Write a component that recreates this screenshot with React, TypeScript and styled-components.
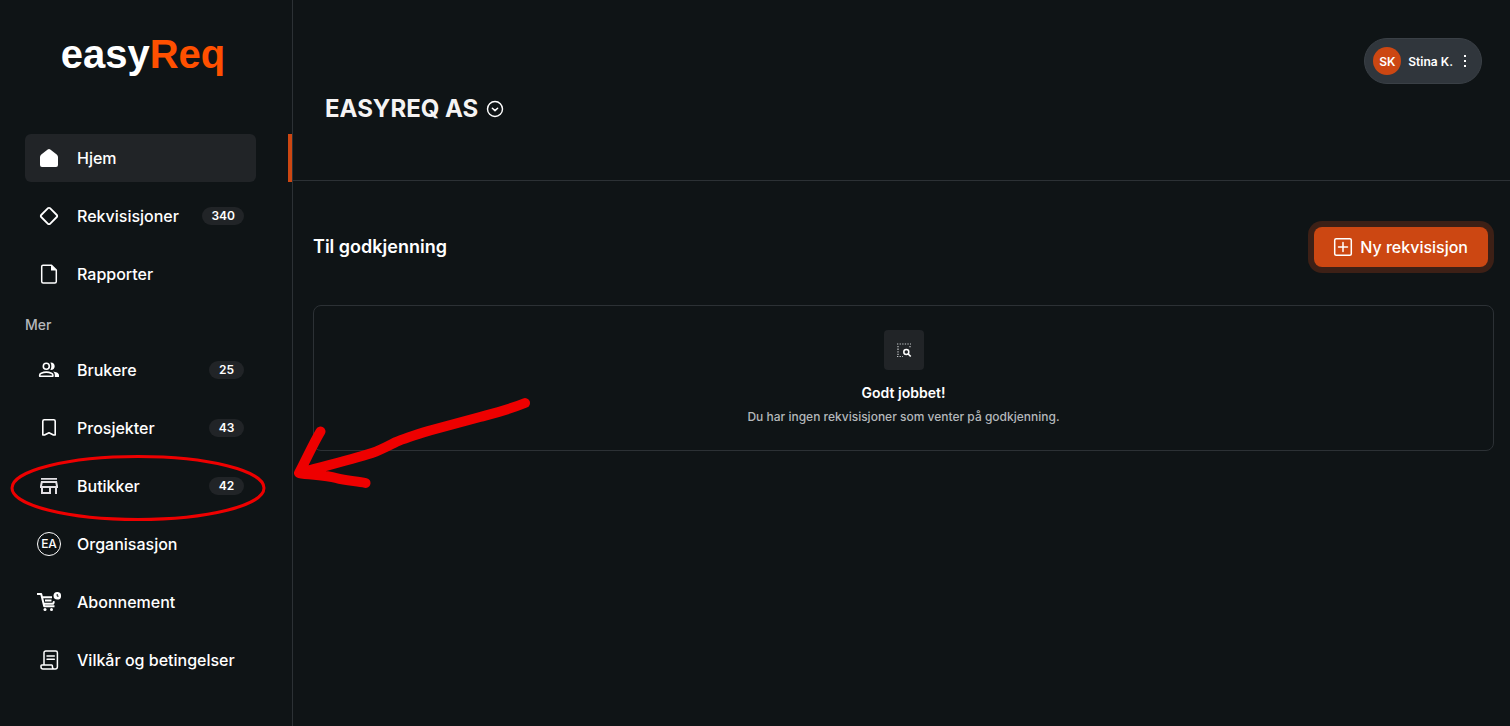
import React from "react";
import styled, { createGlobalStyle } from "styled-components";

const color = {
  bg: "#0f1416",
  raised: "#212427",
  line: "#2c3135",
  accent: "#cc4712",
  text: "#ffffff",
  muted: "#b4b8bb",
  pill: "#30363c",
  mark: "#ee0000",
};

const GlobalStyle = createGlobalStyle`
  *, *::before, *::after { box-sizing: border-box; }
  body {
    margin: 0;
    background: ${color.bg};
    color: ${color.text};
    font-family: Inter, "Liberation Sans", sans-serif;
  }
  button { font: inherit; color: inherit; border: 0; background: none; padding: 0; cursor: pointer; }
  h1, h2, h3, p, ul { margin: 0; padding: 0; }
  ul { list-style: none; }
`;

const Page = styled.div`
  position: relative;
  display: grid;
  grid-template-columns: 293px minmax(0, 1fr);
  min-height: 100vh;
`;

const Sidebar = styled.aside`
  border-right: 1px solid ${color.line};
  padding-bottom: 40px;
`;

const Logo = styled.a`
  display: block;
  padding: 30px 6px 56px 0;
  font: 700 40px/48px "Liberation Sans", Arial, sans-serif;
  text-align: center;
  color: ${color.text};
  text-decoration: none;
  span { color: #ff5000; }
`;

const NavList = styled.ul`
  display: flex;
  flex-direction: column;
  gap: 10px;
`;

const NavRow = styled.li<{ $active?: boolean }>`
  padding: 0 32px 0 25px;
  border-right: 4px solid ${(p) => (p.$active ? color.accent : "transparent")};
`;

const NavLink = styled.a<{ $active?: boolean }>`
  display: flex;
  align-items: center;
  gap: 16px;
  height: 48px;
  padding: 0 12px;
  border-radius: 6px;
  background: ${(p) => (p.$active ? color.raised : "transparent")};
  color: ${color.text};
  font-size: 16px;
  font-weight: 500;
  line-height: 24px;
  text-decoration: none;
  white-space: nowrap;
`;

const NavLabel = styled.span`
  flex: 1;
`;

const Badge = styled.span`
  min-width: 35px;
  padding: 0 9px;
  border-radius: 9px;
  background: ${color.raised};
  font-size: 12px;
  font-weight: 600;
  line-height: 18px;
  text-align: center;
`;

const SectionLabel = styled.h2`
  padding: 17px 25px 11px;
  color: ${color.muted};
  font-size: 14px;
  font-weight: 500;
  line-height: 20px;
`;

const Glyph = styled.svg`
  flex: none;
  display: block;
`;

const Initials = styled.span`
  flex: none;
  display: grid;
  place-items: center;
  width: 24px;
  height: 24px;
  border: 1px solid ${color.text};
  border-radius: 50%;
  font-size: 12px;
  line-height: 12px;
`;

const Header = styled.header`
  display: flex;
  justify-content: space-between;
  align-items: flex-start;
  height: 181px;
  padding: 38px 28px 0 32px;
  border-bottom: 1px solid ${color.line};
`;

const OrgButton = styled.button`
  display: flex;
  align-items: center;
  gap: 8px;
  margin-top: 55px;
`;

const OrgName = styled.h1`
  font-size: 24px;
  font-weight: 700;
  line-height: 32px;
  color: #f5f3f3;
`;

const UserButton = styled.button`
  display: flex;
  align-items: center;
  gap: 7px;
  height: 46px;
  padding: 0 11px 0 8px;
  border: 1px solid #3a4046;
  border-radius: 23px;
  background: ${color.pill};
  font-size: 12px;
  font-weight: 600;
`;

const Avatar = styled.span`
  display: grid;
  place-items: center;
  width: 28px;
  height: 28px;
  border-radius: 50%;
  background: ${color.accent};
`;

const Content = styled.section`
  padding: 46px 16px 40px 20px;
`;

const Toolbar = styled.div`
  display: flex;
  justify-content: space-between;
  align-items: center;
  padding-right: 6px;
`;

const Heading = styled.h2`
  font-size: 18px;
  font-weight: 600;
  line-height: 24px;
`;

const PrimaryButton = styled.button`
  display: flex;
  align-items: center;
  gap: 5px;
  height: 40px;
  padding: 0 20px 0 17px;
  border-radius: 8px;
  background: ${color.accent};
  box-shadow: 0 0 0 6px #3d2016;
  font-size: 16px;
  font-weight: 500;
`;

const EmptyCard = styled.div`
  display: flex;
  flex-direction: column;
  align-items: center;
  margin-top: 38px;
  padding: 24px 16px 23px;
  border: 1px solid ${color.line};
  border-radius: 8px;
  text-align: center;
`;

const EmptyIcon = styled.span`
  display: grid;
  place-items: center;
  width: 40px;
  height: 40px;
  margin-bottom: 13px;
  border-radius: 4px;
  background: ${color.raised};
`;

const EmptyTitle = styled.h3`
  font-size: 14px;
  font-weight: 600;
  line-height: 20px;
`;

const EmptyText = styled.p`
  margin-top: 4px;
  color: ${color.muted};
  font-size: 12px;
  font-weight: 500;
  line-height: 20px;
`;

const Annotation = styled.svg`
  position: absolute;
  top: 0;
  left: 0;
  pointer-events: none;
`;

function Icon({ size = 24, children }: { size?: number; children: React.ReactNode }) {
  return (
    <Glyph width={size} height={size} viewBox="0 0 24 24" fill="none" aria-hidden="true">
      {children}
    </Glyph>
  );
}

const line = { stroke: "currentColor", strokeWidth: 1.5, strokeLinejoin: "round", strokeLinecap: "round" } as const;

const HomeIcon = () => (
  <Icon>
    <path fill="currentColor" d="M10.700 3.500a2 2 0 0 1 2.600 0l6.400 4.900Q21 9.400 21 11v8a2 2 0 0 1-2 2H5a2 2 0 0 1-2-2v-8q0-1.600 1.300-2.600z" />
  </Icon>
);

const DiamondIcon = () => (
  <Icon>
    <path {...line} strokeWidth={1.8} d="M11 4.200a1.400 1.400 0 0 1 2 0l6.800 6.800a1.400 1.400 0 0 1 0 2L13 19.800a1.400 1.400 0 0 1-2 0L4.200 13a1.400 1.400 0 0 1 0-2z" />
  </Icon>
);

const FileIcon = () => (
  <Icon>
    <path {...line} d="M6 3.200h8.500l4.800 4.800v11.500a1.500 1.500 0 0 1-1.500 1.500H6.200a1.500 1.500 0 0 1-1.500-1.500v-15a1.300 1.300 0 0 1 1.300-1.300z" />
    <path fill="currentColor" d="M14 3.200v5.300h5.300z" />
  </Icon>
);

const GroupIcon = () => (
  <Icon>
    <circle cx="9.300" cy="8.200" r="3" {...line} strokeWidth={1.600} />
    <path {...line} strokeWidth={1.600} d="M2.700 18.200v-.9c0-1 .6-1.600 1.500-2 3.200-1.500 7-1.500 10.200 0 .9.400 1.500 1 1.500 2v.9z" />
    <path
      fill="currentColor"
      d="M13.400 11.900c1.300-2.200 1.300-5.200 0-7.400 2.400-.3 4.300 1.400 4.300 3.700s-1.900 4-4.300 3.700zM17.800 19v-1.800c0-1.500-.6-2.700-1.700-3.600 2.500.3 5.900 1.400 5.900 3.600V19z"
    />
  </Icon>
);

const BookmarkIcon = () => (
  <Icon>
    <path {...line} strokeWidth={1.600} d="M5.800 5.200a1.500 1.500 0 0 1 1.500-1.500h9.400a1.500 1.500 0 0 1 1.500 1.500V19h-1.700L12 16.800 7.500 19H5.800z" />
  </Icon>
);

const StoreIcon = () => (
  <Icon>
    <path
      fill="#e2e0e4"
      d="M18.360 9l.6 3H5.040l.6-3h12.720M20 4H4v1.700h16V4zm0 3H4l-1 5v2h1v6h10v-6h4v6h2v-6h1v-2l-1-5zM6 18v-4h6v4H6z"
    />
  </Icon>
);

const CartIcon = () => (
  <Icon>
    <path {...line} strokeWidth={2} strokeLinecap="butt" d="M0 4h4.200l3 12.200h10.300M5 7.200h10M17 11.300l-.8 2.500H7.500M8 10.500h6.500" />
    <circle cx="8" cy="19.500" r="1.500" fill="currentColor" />
    <circle cx="14.500" cy="19.500" r="1.500" fill="currentColor" />
    <circle cx="20.300" cy="5.800" r="3.800" fill="currentColor" />
    <path d="M20.200 4v2.200h1.400" stroke={color.bg} strokeWidth={1} />
  </Icon>
);

const ReceiptIcon = () => (
  <Icon>
    <path {...line} d="M7 17V4.700a1.700 1.700 0 0 1 1.700-1.700h10a1.700 1.700 0 0 1 1.700 1.700v14a2.300 2.300 0 0 1-2.300 2.300H6a2 2 0 0 1-2-2v-1.200a.8.8 0 0 1 .8-.8h9.800a.8.8 0 0 1 .8.8v1a2.300 2.300 0 0 0 2.300 2.300M10 8h7.300M10 11.300h7.300" />
  </Icon>
);

const ChevronCircleIcon = () => (
  <Icon size={18}>
    <circle cx="12" cy="12" r="10" {...line} strokeWidth={1.900} />
    <path {...line} strokeWidth={2} d="M8.500 11l3.500 3.200 3.500-3.200" />
  </Icon>
);

const PlusSquareIcon = () => (
  <Icon>
    <rect x="3.700" y="3.700" width="16.600" height="16.600" rx="1.500" {...line} />
    <path {...line} d="M12 7.500v9M7.500 12h9" />
  </Icon>
);

const MoreIcon = () => (
  <Glyph width="10" height="16" viewBox="0 0 10 16" fill="currentColor" aria-hidden="true">
    <rect x="4" y="2" width="2" height="2" />
    <rect x="4" y="7" width="2" height="2" />
    <rect x="4" y="12" width="2" height="2" />
  </Glyph>
);

const SearchAreaIcon = () => (
  <Glyph width="16" height="16" viewBox="0 0 16 16" fill="none" aria-hidden="true">
    <path d="M1 2h14M1 14.500h6M2 4v9M14 4v2" stroke="#c4c7c9" strokeWidth="1.200" strokeDasharray="1.300 1.300" />
    <circle cx="10.300" cy="10" r="2.500" stroke="#fff" strokeWidth="1.500" />
    <path d="M12.200 12l2.500 2.500" stroke="#fff" strokeWidth="1.700" />
  </Glyph>
);

type Item = { label: string; icon: React.ReactNode; count?: number; active?: boolean };

const mainItems: Item[] = [
  { label: "Hjem", icon: <HomeIcon />, active: true },
  { label: "Rekvisisjoner", icon: <DiamondIcon />, count: 340 },
  { label: "Rapporter", icon: <FileIcon /> },
];

const moreItems: Item[] = [
  { label: "Brukere", icon: <GroupIcon />, count: 25 },
  { label: "Prosjekter", icon: <BookmarkIcon />, count: 43 },
  { label: "Butikker", icon: <StoreIcon />, count: 42 },
  { label: "Organisasjon", icon: <Initials>EA</Initials> },
  { label: "Abonnement", icon: <CartIcon /> },
  { label: "Vilkår og betingelser", icon: <ReceiptIcon /> },
];

function Nav({ items }: { items: Item[] }) {
  return (
    <NavList>
      {items.map((item) => (
        <NavRow key={item.label} $active={item.active}>
          <NavLink href="#" $active={item.active} aria-current={item.active ? "page" : undefined}>
            {item.icon}
            <NavLabel>{item.label}</NavLabel>
            {item.count !== undefined && <Badge>{item.count}</Badge>}
          </NavLink>
        </NavRow>
      ))}
    </NavList>
  );
}

export default function App() {
  return (
    <>
      <GlobalStyle />
      <Page>
        <Sidebar>
          <Logo href="#">
            easy<span>Req</span>
          </Logo>
          <nav>
            <Nav items={mainItems} />
            <SectionLabel>Mer</SectionLabel>
            <Nav items={moreItems} />
          </nav>
        </Sidebar>
        <main>
          <Header>
            <OrgButton>
              <OrgName>EASYREQ AS</OrgName>
              <ChevronCircleIcon />
            </OrgButton>
            <UserButton>
              <Avatar>SK</Avatar>
              <span>Stina K.</span>
              <MoreIcon />
            </UserButton>
          </Header>
          <Content>
            <Toolbar>
              <Heading>Til godkjenning</Heading>
              <PrimaryButton>
                <PlusSquareIcon />
                Ny rekvisisjon
              </PrimaryButton>
            </Toolbar>
            <EmptyCard>
              <EmptyIcon>
                <SearchAreaIcon />
              </EmptyIcon>
              <EmptyTitle>Godt jobbet!</EmptyTitle>
              <EmptyText>Du har ingen rekvisisjoner som venter på godkjenning.</EmptyText>
            </EmptyCard>
          </Content>
        </main>
        <Annotation width="540" height="530" viewBox="0 0 540 530" fill="none" stroke={color.mark} aria-hidden="true">
          <ellipse cx="138" cy="488" rx="126" ry="31.500" strokeWidth="3" />
          <path
            d="M525 403C508 410 495 413 480 417L430 430.500C415 435 405 438 396 442C388 446 381 450 372 453C350 460 325 466 299 473C306 460 313 444 320.500 431.500M299 473C310 475 325 475 336 478C347 481 357 481 365.500 483"
            strokeWidth="10"
            strokeLinecap="round"
            strokeLinejoin="round"
          />
        </Annotation>
      </Page>
    </>
  );
}
